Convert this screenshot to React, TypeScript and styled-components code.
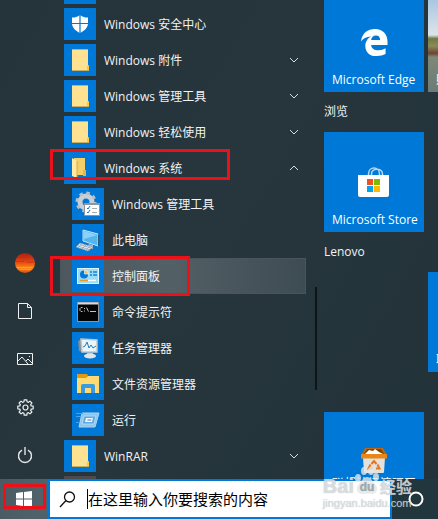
import React from "react";
import styled, { createGlobalStyle, css } from "styled-components";

const Global = createGlobalStyle`
  * { box-sizing: border-box; }
  body { margin: 0; overflow: hidden; background: #24333a; }
  button { border: 0; padding: 0; margin: 0; background: none; color: inherit; font: inherit; text-align: left; }
  svg { display: block; flex: none; }
`;

const Screen = styled.div`
  position: relative;
  height: 100vh;
  display: flex;
  flex-direction: column;
  overflow: hidden;
  background: linear-gradient(120deg, #25343b, #26363c 45%, #23323a);
  color: #f1f3f4;
  font: 12px/20px "Open Sans", "Noto Sans CJK SC", sans-serif;
`;

const StartMenu = styled.main`
  flex: 1;
  min-height: 0;
  display: grid;
  grid-template-columns: 50px 256px 18px 1fr;
  overflow: hidden;
`;

const Rail = styled.nav`
  display: flex;
  flex-direction: column;
  justify-content: flex-end;
`;

const RailButton = styled.button`
  height: 48px;
  display: grid;
  place-items: center;
`;

const AppList = styled.div`
  min-height: 0;
  overflow: hidden;
  padding-left: 10px;
`;

const Row = styled.button<{ $nested?: boolean; $active?: boolean; $cut?: boolean }>`
  width: 100%;
  height: ${(p) => (p.$cut ? 6 : 36)}px;
  display: flex;
  align-items: ${(p) => (p.$cut ? "flex-end" : "center")};
  gap: 8px;
  overflow: hidden;
  padding: ${(p) => (p.$cut ? "0 7px 2px" : "0 7px")};
  padding-left: ${(p) => (p.$nested ? 12 : 4)}px;
  ${(p) =>
    p.$active &&
    css`
      background: linear-gradient(90deg, #4c585e, #536066 45%, #3d4b52);
      box-shadow: inset 0 0 0 1px #48555b;
    `}
`;

const AppIcon = styled.span<{ $muted?: boolean }>`
  width: 32px;
  height: 32px;
  flex: none;
  display: grid;
  place-items: center;
  background: ${(p) => (p.$muted ? "#4c4a4b" : "#0078d7")};
`;

const RowLabel = styled.span`
  flex: 1;
  padding-top: 2px;
  white-space: nowrap;
`;

const ScrollTrack = styled.div`
  display: flex;
  flex-direction: column;
  align-items: center;
  justify-content: flex-end;
  padding: 0 0 89px 2px;
`;

const ScrollThumb = styled.div`
  width: 2px;
  height: 103px;
  background: #0d1518;
`;

const Tiles = styled.div`
  display: grid;
  grid-template-columns: 100px 100px;
  grid-template-rows: 92px 40px 100px 40px 100px 40px 100px;
  column-gap: 4px;
  min-width: 0;
  overflow: hidden;
`;

const Tile = styled.button<{ $second?: boolean; $photo?: boolean }>`
  grid-column: ${(p) => (p.$second ? 2 : 1)};
  display: flex;
  flex-direction: column;
  align-items: center;
  justify-content: flex-end;
  gap: 13px;
  padding: 0 8px 2px;
  overflow: hidden;
  color: #fff;
  background: ${(p) =>
    p.$photo
      ? "linear-gradient(#a9c7e2, #dce4ea 38%, #6e7a43 42%, #8d8a58 50%, #6d4433 58%, #7d8878 62%, #6c7b75)"
      : "#0078d7"};
`;

const TileLabel = styled.span`
  width: 100%;
  white-space: nowrap;
`;

const TallTile = styled(Tile)`
  gap: 0;
  justify-content: flex-start;
  padding-top: 34px;
`;

const TallLabel = styled.span`
  width: 100%;
  padding-top: 2px;
  line-height: 16px;
`;

const GroupTitle = styled.h2`
  grid-column: 1 / 3;
  margin: 0;
  align-self: center;
  font: inherit;
`;

const Taskbar = styled.footer`
  height: 40px;
  display: grid;
  grid-template-columns: 48px 1fr 46px;
  background: #22363d;
`;

const StartButton = styled.button`
  display: grid;
  place-items: center;
  background: linear-gradient(90deg, #4a5b63, #50636b);
`;

const SearchBox = styled.label`
  display: flex;
  align-items: center;
  min-width: 0;
  padding-left: 9px;
  background: #fff;
  border: 2px solid #0078d7;
`;

const Caret = styled.span`
  width: 1px;
  height: 20px;
  margin-left: 11px;
  background: #000;
`;

const SearchInput = styled.input`
  flex: 1;
  min-width: 0;
  border: 0;
  padding: 0;
  outline: 0;
  background: transparent;
  font: 15px/22px "Open Sans", "Noto Sans CJK SC", sans-serif;
  &::placeholder { color: #000; opacity: 1; }
`;

const CortanaButton = styled.button`
  display: flex;
  align-items: center;
  padding-left: 16px;
`;

const Marker = styled.div<{ $x: number; $y: number; $w: number; $h: number }>`
  position: absolute;
  left: ${(p) => p.$x}px;
  top: ${(p) => p.$y}px;
  width: ${(p) => p.$w}px;
  height: ${(p) => p.$h}px;
  border: 3px solid #ec1018;
  pointer-events: none;
`;

const Watermark = styled.div`
  position: absolute;
  right: 26px;
  bottom: 9px;
  color: rgba(226, 231, 234, 0.8);
  pointer-events: none;
  text-shadow: 0 0 1px rgba(120, 130, 135, 0.6);
`;

const WatermarkBrand = styled.div`
  display: flex;
  align-items: flex-end;
  font: bold 20px/20px "Liberation Sans", sans-serif;
`;

const WatermarkName = styled.span`
  font: bold 16px/20px "Noto Sans CJK SC", sans-serif;
`;

const WatermarkSite = styled.div`
  font: 11px/14px "Liberation Sans", sans-serif;
`;

const Folder = ({ open }: { open?: boolean }) => (
  <svg width="18" height="24" viewBox="-1 0 18 24" aria-hidden="true">
    {open ? (
      <>
        <path d="M2 2h11v17H2z" fill="#f4cf68" />
        <path d="M0 2l5 3v17l-5-2z" fill="#ffe9a3" />
        <path d="M11 14h3v6h-3z" fill="#e9b642" />
        <path d="M5 5v17" stroke="#d6ac45" />
      </>
    ) : (
      <>
        <path d="M0 1h16v16l1 1v5H0z" fill="#ffe291" />
        <path d="M15 18l2-1v6h-2z" fill="#ffc63e" />
        <path d="M0 1.500h16M0 22.500h17" stroke="#c9ad62" />
      </>
    )}
  </svg>
);

const Shield = () => (
  <svg width="18" height="20" viewBox="0 0 18 20" aria-hidden="true">
    <path d="M9 1c2.500 2 5 2.500 8 2.500V9c0 5-4 8-8 10-4-2-8-5-8-10V3.500C4 3.500 6.500 3 9 1z" fill="#fff" />
    <path d="M9 0v20M0 9.500h18" stroke="#0078d7" strokeWidth="1.200" />
  </svg>
);

const AdminTools = () => (
  <svg width="26" height="26" viewBox="0 0 26 26" aria-hidden="true">
    <circle cx="11" cy="11" r="6" fill="none" stroke="#c9d0d5" strokeWidth="5" />
    <circle cx="11" cy="11" r="9" fill="none" stroke="#b9c1c7" strokeWidth="3" strokeDasharray="3.500 3.570" />
    <rect x="9.500" y="12.500" width="15" height="12" fill="#fff" stroke="#8b969e" />
    <path d="M9 13h16" stroke="#8b969e" strokeWidth="2" />
    <path d="M12 17l1 1 2-3M12 21l1 1 2-3" fill="none" stroke="#1679cf" />
    <path d="M17 17.500h5M17 21.500h5" stroke="#a7adb1" />
  </svg>
);

const Computer = () => (
  <svg width="26" height="24" viewBox="0 0 26 24" aria-hidden="true">
    <path d="M8 2l15 4v12L8 13z" fill="#54b6ef" stroke="#b8e2fa" />
    <path d="M9 3l13 4-13 4z" fill="#8cd2f8" />
    <path d="M23 6l1.500 1v11L23 18z" fill="#2a587c" />
    <path d="M14 16l4 1v4l-6-2z" fill="#a6b6c2" />
    <path d="M5 15l13 4-5 4-12-4z" fill="#dfe7ec" stroke="#8197a8" strokeWidth=".6" />
    <path d="M3 18l12 4M5 16.500l11 3.500M7 15.500l-4 4M11 17l-4 4M15 18l-4 4" stroke="#8aa0af" strokeWidth=".7" />
  </svg>
);

const ControlPanel = () => (
  <svg width="22" height="18" viewBox="0 0 22 18" aria-hidden="true">
    <rect x=".5" y="1.500" width="21" height="15" fill="#9bdcf9" stroke="#dff5ff" />
    <circle cx="7" cy="7.500" r="4" fill="#0078d7" />
    <path d="M7.500 7V3A4 4 0 0 1 11.500 7z" fill="#f9bc45" stroke="#fff" strokeWidth=".6" />
    <path d="M13 5h2M16 5h4M13 8h2M16 8h4" stroke="#1883cf" strokeWidth="1.500" />
    <path d="M3 13.500h8" stroke="#e69c23" strokeWidth="1.500" />
    <path d="M11 13.500h8" stroke="#fff" strokeWidth="1.500" />
  </svg>
);

const Terminal = () => (
  <svg width="22" height="20" viewBox="0 0 22 20" aria-hidden="true">
    <rect x=".5" y=".5" width="21" height="19" fill="#050505" stroke="#8f9499" />
    <path d="M1 1.500h20" stroke="#d7dadd" strokeWidth="2" />
    <path d="M5.500 5.500H4L3 6.500v2l1 1h1.500M7.500 6v1M7.500 8.500v1M9.500 5.500l2 4M13 9.500h6" fill="none" stroke="#c4c4c4" />
  </svg>
);

const TaskManager = () => (
  <svg width="24" height="24" viewBox="0 0 24 24" aria-hidden="true">
    <path d="M2 5l4-2v13l-3-1z" fill="#858d92" />
    <path d="M5 3l16 1v12L6 16z" fill="#edf4f7" stroke="#bfc7cb" strokeWidth="1.500" />
    <path d="M7 11l2-1 2-4 2 6 2-3 2 3 3-2" fill="none" stroke="#1680c7" />
    <path d="M11 17h6v3h-6z" fill="#b7bec1" />
    <ellipse cx="14" cy="20" rx="6" ry="2.500" fill="#e2e4e5" />
  </svg>
);

const Explorer = () => (
  <svg width="24" height="20" viewBox="0 0 24 20" aria-hidden="true">
    <path d="M1 0h10l1 2-2 4H1z" fill="#e09a0c" />
    <path d="M1 4h9l2-2h11v17H1z" fill="#ffda70" />
    <path d="M5 12q0-2 2-2h10q2 0 2 2v7h-4v-5H9v5H5z" fill="#3a9be0" />
  </svg>
);

const Run = () => (
  <svg width="25" height="20" viewBox="0 0 25 20" aria-hidden="true">
    <path d="M6 3h17l-4 14H3z" fill="#8cc6ec" stroke="#a9d5f2" />
    <path d="M8 6h12l-2 8H6z" fill="#5aabe2" stroke="#c0e1f7" strokeWidth=".8" />
    <path d="M10 8h7l-1 4H9z" fill="#f0f9ff" />
    <path d="M11.500 9.500h4l-.3 1h-4z" fill="#4a7fc0" />
    <path d="M0 3.500h7M0 6.500h5M0 12.500h4" stroke="#4ba1e3" />
  </svg>
);

const Chevron = ({ up }: { up?: boolean }) => (
  <svg width="10" height="6" viewBox="0 0 10 6" fill="none" stroke="#d8dcde" aria-hidden="true">
    <path d={up ? "M1 5l4-4 4 4" : "M1 1l4 4 4-4"} />
  </svg>
);

const Avatar = () => (
  <svg width="20" height="20" viewBox="0 0 20 20" aria-hidden="true">
    <defs>
      <linearGradient id="sunset" x2="0" y2="1">
        <stop stopColor="#a81f12" />
        <stop offset=".45" stopColor="#e34512" />
        <stop offset=".75" stopColor="#ff8a16" />
        <stop offset="1" stopColor="#d64b12" />
      </linearGradient>
    </defs>
    <circle cx="10" cy="10" r="10" fill="url(#sunset)" />
    <path d="M3 4.500h10M1 8.500h8M12 9.500h7" stroke="#b52e17" opacity=".5" />
    <path d="M2 14.500h15M5 16.500h11" stroke="#ffc32b" opacity=".5" />
  </svg>
);

const Doc = () => (
  <svg width="14" height="16" viewBox="0 0 14 16" fill="none" stroke="#eef0f1" aria-hidden="true">
    <path d="M.5.5h9l4 4v11H.5zM9.500.5v4h4" />
  </svg>
);

const Picture = () => (
  <svg width="16" height="12" viewBox="0 0 16 12" fill="none" stroke="#eef0f1" aria-hidden="true">
    <path d="M.5.5h15v11H.5zM1 8l4-4 6 7M9 8l2-2 4 4" />
    <path d="M12 3.500h1" />
  </svg>
);

const gearOutline = Array.from({ length: 8 }, (_, i) =>
  [
    [-15, 5.9],
    [-10, 7.8],
    [10, 7.8],
    [15, 5.9],
  ].map(([offset, radius]) => {
    const a = ((i * 45 + offset) * Math.PI) / 180;
    return `${(radius * Math.sin(a)).toFixed(2)},${(-radius * Math.cos(a)).toFixed(2)}`;
  }),
)
  .flat()
  .join(" ");

const Gear = () => (
  <svg width="17" height="17" viewBox="-8.500 -8.500 17 17" fill="none" stroke="#eef0f1" strokeWidth="1.200" aria-hidden="true">
    <polygon points={gearOutline} strokeLinejoin="round" />
    <circle r="2.500" />
  </svg>
);

const Power = () => (
  <svg width="16" height="17" viewBox="0 0 16 17" fill="none" stroke="#e1e4e5" strokeWidth="1.400" aria-hidden="true">
    <path d="M5 3.200a6.500 6.500 0 1 0 6 0M8 0v8" />
  </svg>
);

const Edge = () => (
  <svg width="27" height="29" viewBox="0 0 28 30" aria-hidden="true">
    <path
      d="M0 14C1 5 7 1 14.500 1 23 1 27.500 7 27.500 14v3.500H10.500c.3 4 3.500 5.500 7.500 5.500 3 0 5.500-.8 7.500-2v6c-2.500 1.300-5.500 2-9 2C9 29.500 4.500 25 4.500 18.500c0-4.500 2.500-8 6-9.700C5.500 9 2 11 0 14zm10.500-1.700h9.300c0-3-1.600-4.500-4.400-4.500-2.700 0-4.400 1.700-4.900 4.500z"
      fill="#fff"
    />
  </svg>
);

const Store = () => (
  <svg width="32" height="30" viewBox="0 0 32 30" aria-hidden="true">
    <path d="M10.500 9V7c0-8 11-8 11 0v2M13.500 9V7c0-6.500 11-6.500 11 0v2" fill="none" stroke="#b5d8f5" strokeWidth="1.500" />
    <path d="M0 8h31v20q0 2-2 2H2q-2 0-2-2z" fill="#fff" />
    <path d="M9 12h6v6H9z" fill="#f25022" />
    <path d="M16 12h6v6h-6z" fill="#7fba00" />
    <path d="M9 19h6v6H9z" fill="#00a4ef" />
    <path d="M16 19h6v6h-6z" fill="#ffb900" />
  </svg>
);

const Bin = () => (
  <svg width="28" height="28" viewBox="0 0 28 28" aria-hidden="true">
    <path d="M5 2h18l4 7H1z" fill="#b96713" />
    <path d="M7 3h14l3 5H4z" fill="#7d430c" />
    <path d="M5 8l4-4 4 1 2-2 4 3 4 2z" fill="#fff" />
    <path d="M3 12h22l-1 14q0 1-1 1H5q-1 0-1-1z" fill="#e4e0dc" />
    <path d="M1 8h26v4.500H1z" fill="#e98617" />
    <path d="M11.500 18l2.500-3 2.500 3M17.500 18.500l2 4H16M12.500 22.500h-4l2-4" fill="none" stroke="#e37621" strokeWidth="2" />
  </svg>
);

const WinLogo = () => (
  <svg width="16" height="16" viewBox="0 0 16 16" fill="#fff" aria-hidden="true">
    <path d="M0 2l7-1v6.500H0zM8 1l8-1v7.500H8zM0 8.500h7V15l-7-1zM8 8.500h8V16l-8-1z" />
  </svg>
);

const SearchIcon = () => (
  <svg width="17" height="17" viewBox="0 0 17 17" fill="none" stroke="#111" strokeWidth="1.300" aria-hidden="true">
    <circle cx="10.500" cy="6" r="5" />
    <path d="M7 9.500L1 16" />
  </svg>
);

const Ring = () => (
  <svg width="16" height="16" viewBox="0 0 16 16" aria-hidden="true">
    <circle cx="8" cy="8" r="6.500" fill="none" stroke="#fff" strokeWidth="2" />
  </svg>
);

const Paw = () => (
  <svg width="26" height="30" viewBox="0 0 26 30" fill="currentColor" aria-hidden="true">
    <ellipse cx="4" cy="12" rx="3" ry="4" />
    <ellipse cx="10" cy="5" rx="3" ry="4" />
    <ellipse cx="17" cy="5" rx="3" ry="4" />
    <ellipse cx="22" cy="11" rx="3" ry="4" />
    <path d="M13 11c4 0 5 4 8 7 4 4 2 10-3 10-3-.5-7-.5-10 0-5 0-7-6-3-10 3-3 4-7 8-7z" />
    <text x="13" y="25" textAnchor="middle" fontFamily="Liberation Sans, sans-serif" fontWeight="bold" fontSize="12" fill="#9fa9ae">
      du
    </text>
  </svg>
);

type Entry = {
  label: string;
  icon: React.ReactNode;
  nested?: boolean;
  active?: boolean;
  fold?: "up" | "down";
};

const entries: Entry[] = [
  { label: "Windows 安全中心", icon: <Shield /> },
  { label: "Windows 附件", icon: <Folder />, fold: "down" },
  { label: "Windows 管理工具", icon: <Folder />, fold: "down" },
  { label: "Windows 轻松使用", icon: <Folder />, fold: "down" },
  { label: "Windows 系统", icon: <Folder open />, fold: "up" },
  { label: "Windows 管理工具", icon: <AdminTools />, nested: true },
  { label: "此电脑", icon: <Computer />, nested: true },
  { label: "控制面板", icon: <ControlPanel />, nested: true, active: true },
  { label: "命令提示符", icon: <Terminal />, nested: true },
  { label: "任务管理器", icon: <TaskManager />, nested: true },
  { label: "文件资源管理器", icon: <Explorer />, nested: true },
  { label: "运行", icon: <Run />, nested: true },
  { label: "WinRAR", icon: <Folder />, fold: "down" },
];

export default function App() {
  return (
    <Screen>
      <Global />
      <StartMenu>
        <Rail>
          <RailButton aria-label="账户"><Avatar /></RailButton>
          <RailButton aria-label="文档"><Doc /></RailButton>
          <RailButton aria-label="图片"><Picture /></RailButton>
          <RailButton aria-label="设置"><Gear /></RailButton>
          <RailButton aria-label="电源"><Power /></RailButton>
        </Rail>
        <AppList>
          <Row $cut aria-label="Windows"><AppIcon /></Row>
          {entries.map((e, i) => (
            <Row key={i} $nested={e.nested} $active={e.active}>
              <AppIcon>{e.icon}</AppIcon>
              <RowLabel>{e.label}</RowLabel>
              {e.fold && <Chevron up={e.fold === "up"} />}
            </Row>
          ))}
          <Row aria-label="更多"><AppIcon $muted /></Row>
        </AppList>
        <ScrollTrack><ScrollThumb /></ScrollTrack>
        <Tiles>
          <Tile><Edge /><TileLabel>Microsoft Edge</TileLabel></Tile>
          <Tile $second $photo><TileLabel>照片</TileLabel></Tile>
          <GroupTitle>浏览</GroupTitle>
          <Tile><Store /><TileLabel>Microsoft Store</TileLabel></Tile>
          <GroupTitle>Lenovo</GroupTitle>
          <Tile $second><TileLabel>联想</TileLabel></Tile>
          <GroupTitle />
          <TallTile><Bin /><TallLabel>联想垃圾清理工具</TallLabel></TallTile>
        </Tiles>
      </StartMenu>
      <Taskbar>
        <StartButton aria-label="开始"><WinLogo /></StartButton>
        <SearchBox>
          <SearchIcon />
          <Caret />
          <SearchInput aria-label="搜索" placeholder="在这里输入你要搜索的内容" />
        </SearchBox>
        <CortanaButton aria-label="Cortana"><Ring /></CortanaButton>
      </Taskbar>
      <Marker $x={50} $y={149} $w={180} $h={31} />
      <Marker $x={50} $y={256} $w={140} $h={40} />
      <Marker $x={3} $y={484} $w={43} $h={25} />
      <Watermark>
        <WatermarkBrand>Bai<Paw /><WatermarkName>经验</WatermarkName></WatermarkBrand>
        <WatermarkSite>jingyan.baidu.com</WatermarkSite>
      </Watermark>
    </Screen>
  );
}
